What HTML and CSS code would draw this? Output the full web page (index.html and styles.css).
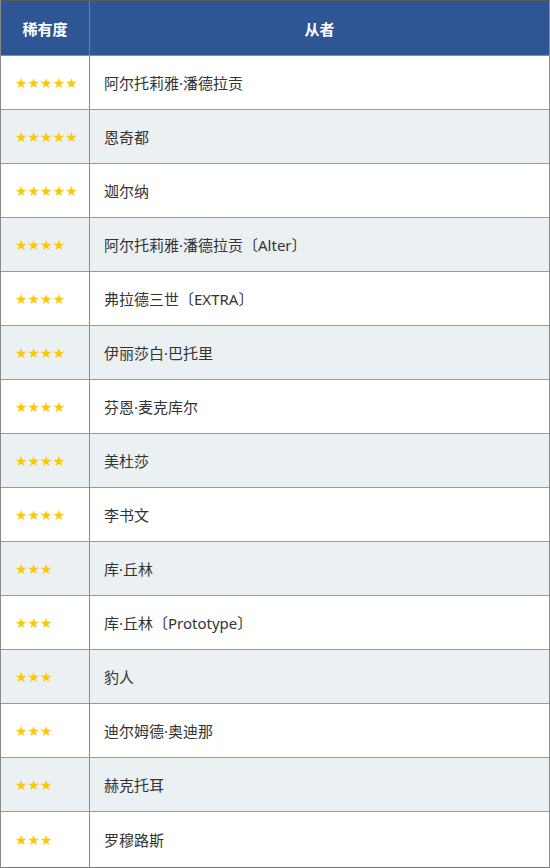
FILE: index.html
```html
<!DOCTYPE html>
<html lang="zh">
<head>
<meta charset="utf-8">
<link rel="stylesheet" href="styles.css">
</head>
<body>
<div class="table">
  <div class="row head">
    <div class="c1">稀有度</div>
    <div class="c2">从者</div>
  </div>
  <div class="row"><div class="c1 stars">★★★★★</div><div class="c2">阿尔托莉雅·潘德拉贡</div></div>
  <div class="row alt"><div class="c1 stars">★★★★★</div><div class="c2">恩奇都</div></div>
  <div class="row"><div class="c1 stars">★★★★★</div><div class="c2">迦尔纳</div></div>
  <div class="row alt"><div class="c1 stars">★★★★</div><div class="c2">阿尔托莉雅·潘德拉贡〔Alter〕</div></div>
  <div class="row"><div class="c1 stars">★★★★</div><div class="c2">弗拉德三世〔EXTRA〕</div></div>
  <div class="row alt"><div class="c1 stars">★★★★</div><div class="c2">伊丽莎白·巴托里</div></div>
  <div class="row"><div class="c1 stars">★★★★</div><div class="c2">芬恩·麦克库尔</div></div>
  <div class="row alt"><div class="c1 stars">★★★★</div><div class="c2">美杜莎</div></div>
  <div class="row"><div class="c1 stars">★★★★</div><div class="c2">李书文</div></div>
  <div class="row alt"><div class="c1 stars">★★★</div><div class="c2">库·丘林</div></div>
  <div class="row"><div class="c1 stars">★★★</div><div class="c2">库·丘林〔Prototype〕</div></div>
  <div class="row alt"><div class="c1 stars">★★★</div><div class="c2">豹人</div></div>
  <div class="row"><div class="c1 stars">★★★</div><div class="c2">迪尔姆德·奥迪那</div></div>
  <div class="row alt"><div class="c1 stars">★★★</div><div class="c2">赫克托耳</div></div>
  <div class="row last"><div class="c1 stars">★★★</div><div class="c2">罗穆路斯</div></div>
</div>
</body>
</html>
```
FILE: styles.css
```css
html, body {
  margin: 0;
  padding: 0;
  background: #ffffff;
}
body {
  font-family: "Noto Sans", "Noto Sans CJK SC", sans-serif;
  font-size: 15px;
  color: #333333;
}
.table {
  width: 550px;
  box-sizing: border-box;
  border-top: 1px solid #5a5a5a;
  border-left: 1px solid #8a8a8a;
  border-right: 1px solid #8a8a8a;
}
.row {
  display: grid;
  grid-template-columns: 89px 1fr;
  height: 54px;
  box-sizing: border-box;
  border-bottom: 1px solid #9a9a9a;
  background: #ffffff;
}
.row.last {
  height: 56px;
  border-bottom: 1px solid #7a7a7a;
}
.row.alt {
  background: #ebf0f3;
}
.row.head {
  height: 55px;
  background: #2e5594;
  color: #ffffff;
  font-weight: bold;
  font-size: 15px;
  border-bottom: 1px solid #7f8ea8;
}
.c1 {
  border-right: 1px solid #8a8a8a;
  display: flex;
  align-items: center;
  padding-left: 14px;
}
.head .c1 {
  justify-content: center;
  padding-left: 0;
  border-right: 1px solid #6f7f9c;
}
.c2 {
  display: flex;
  align-items: center;
  padding-left: 14px;
}
.head .c2 {
  justify-content: center;
  padding-left: 0;
}
.stars {
  color: #fcc800;
  font-family: "DejaVu Sans", sans-serif;
  font-size: 14px;
  letter-spacing: 0;
}
```
